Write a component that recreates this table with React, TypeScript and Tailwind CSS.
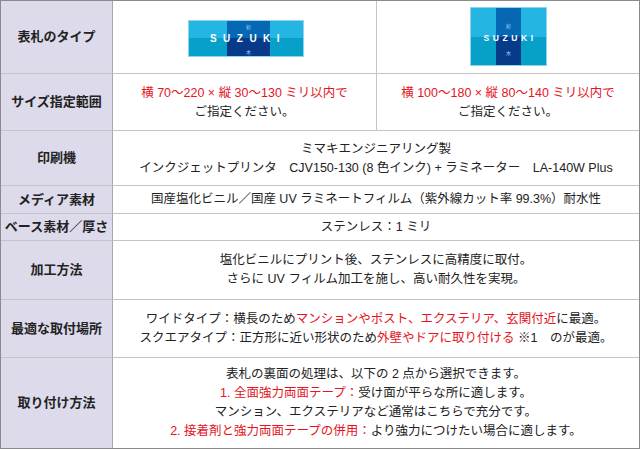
import React from "react";

const font = { fontFamily: '"Liberation Sans", "Noto Sans CJK JP", sans-serif' };

function WideLogo() {
  return (
    <svg width="116" height="37" viewBox="0 0 116 37">
      <rect x="0" y="0" width="116" height="37" fill="#8fd3ee" />
      <rect x="1" y="1" width="38" height="17" fill="#25b5e3" />
      <rect x="1" y="18" width="38" height="18" fill="#06a0c9" />
      <rect x="39" y="1" width="43" height="17" fill="#0668b5" />
      <rect x="39" y="18" width="43" height="18" fill="#083a8a" />
      <rect x="82" y="1" width="33" height="17" fill="#25b5e3" />
      <rect x="82" y="18" width="33" height="18" fill="#06a0c9" />
      <text x="60.5" y="9" fill="#9fd0f0" fontSize="5" textAnchor="middle" style={{ fontFamily: '"Noto Sans CJK JP", sans-serif' }}>鈴</text>
      <text x="60.5" y="34" fill="#9fd0f0" fontSize="5" textAnchor="middle" style={{ fontFamily: '"Noto Sans CJK JP", sans-serif' }}>木</text>
      <text x="60" y="22" fill="#ffffff" fontSize="10" fontWeight="700" textAnchor="middle" letterSpacing="6.5" style={{ fontFamily: '"Liberation Sans", sans-serif' }}>SUZUKI</text>
    </svg>
  );
}

function SquareLogo() {
  return (
    <svg width="77" height="59" viewBox="0 0 77 59">
      <rect x="0" y="0" width="77" height="59" fill="#8fd3ee" />
      <rect x="1" y="1" width="25" height="29" fill="#25b5e3" />
      <rect x="1" y="30" width="25" height="28" fill="#06a0c9" />
      <rect x="26" y="1" width="25" height="29" fill="#0668b5" />
      <rect x="26" y="30" width="25" height="28" fill="#083a8a" />
      <rect x="51" y="1" width="25" height="29" fill="#25b5e3" />
      <rect x="51" y="30" width="25" height="28" fill="#06a0c9" />
      <text x="38.5" y="21" fill="#9fd0f0" fontSize="5" textAnchor="middle" style={{ fontFamily: '"Noto Sans CJK JP", sans-serif' }}>鈴</text>
      <text x="38.5" y="48" fill="#9fd0f0" fontSize="5" textAnchor="middle" style={{ fontFamily: '"Noto Sans CJK JP", sans-serif' }}>木</text>
      <text x="40" y="34" fill="#ffffff" fontSize="8.5" fontWeight="700" textAnchor="middle" letterSpacing="3.6" style={{ fontFamily: '"Liberation Sans", sans-serif' }}>SUZUKI</text>
    </svg>
  );
}

const label =
  "flex items-center justify-center bg-[#dddaeb] border-r border-r-[#a8a8a8] text-[13px] font-bold text-[#222]";
const cell = "flex flex-col items-center justify-center text-center text-[12.5px] leading-[19px] text-[#222]";
const R = ({ children }: { children: React.ReactNode }) => <span className="text-[#e5141e]">{children}</span>;

export default function App() {
  return (
    <div className="bg-white w-[640px] h-[450px]" style={font}>
      <div className="w-[640px] h-[449px] border border-[#8a8a8a] grid grid-cols-[112px_264px_1fr] grid-rows-[73px_57px_55px_28px_27px_59px_58px_1fr]">
        {/* Row 1 */}
        <div className={`${label} border-b border-b-[#c4c4c4]`}>表札のタイプ</div>
        <div className="flex items-center justify-center border-b border-r border-[#c4c4c4] pt-[3px] pl-[2px]">
          <WideLogo />
        </div>
        <div className="flex items-center justify-center border-b border-[#c4c4c4] pb-[2px]">
          <SquareLogo />
        </div>
        {/* Row 2 */}
        <div className={`${label} border-b border-b-[#c4c4c4]`}>サイズ指定範囲</div>
        <div className={`${cell} border-b border-r border-[#c4c4c4] pt-[2px]`}>
          <R>横 70〜220 × 縦 30〜130 ミリ以内で</R>
          <span>ご指定ください。</span>
        </div>
        <div className={`${cell} border-b border-[#c4c4c4] pt-[2px]`}>
          <R>横 100〜180 × 縦 80〜140 ミリ以内で</R>
          <span>ご指定ください。</span>
        </div>
        {/* Row 3 */}
        <div className={`${label} border-b border-b-[#c4c4c4]`}>印刷機</div>
        <div className={`${cell} col-span-2 border-b border-[#c4c4c4] pt-[2px]`}>
          <span>ミマキエンジニアリング製</span>
          <span>インクジェットプリンタ　CJV150-130 (8 色インク) + ラミネーター　LA-140W Plus</span>
        </div>
        {/* Row 4 */}
        <div className={`${label} border-b border-b-[#c4c4c4]`}>メディア素材</div>
        <div className={`${cell} col-span-2 border-b border-[#c4c4c4]`}>
          <span>国産塩化ビニル／国産 UV ラミネートフィルム（紫外線カット率 99.3%）耐水性</span>
        </div>
        {/* Row 5 */}
        <div className={`${label} border-b border-b-[#c4c4c4]`}>ベース素材／厚さ</div>
        <div className={`${cell} col-span-2 border-b border-[#c4c4c4]`}>
          <span>ステンレス：1 ミリ</span>
        </div>
        {/* Row 6 */}
        <div className={`${label} border-b border-b-[#c4c4c4]`}>加工方法</div>
        <div className={`${cell} col-span-2 border-b border-[#c4c4c4]`}>
          <span>塩化ビニルにプリント後、ステンレスに高精度に取付。</span>
          <span>さらに UV フィルム加工を施し、高い耐久性を実現。</span>
        </div>
        {/* Row 7 */}
        <div className={`${label} border-b border-b-[#c4c4c4]`}>最適な取付場所</div>
        <div className={`${cell} col-span-2 border-b border-[#c4c4c4]`}>
          <span>
            ワイドタイプ：横長のため<R>マンションやポスト、エクステリア、玄関付近</R>に最適。
          </span>
          <span>
            スクエアタイプ：正方形に近い形状のため<R>外壁やドアに取り付ける</R> ※1　のが最適。
          </span>
        </div>
        {/* Row 8 */}
        <div className={label}>取り付け方法</div>
        <div className={`${cell} col-span-2`}>
          <span>表札の裏面の処理は、以下の 2 点から選択できます。</span>
          <span>
            <R>1. 全面強力両面テープ：</R>受け面が平らな所に適します。
          </span>
          <span>マンション、エクステリアなど通常はこちらで充分です。</span>
          <span>
            <R>2. 接着剤と強力両面テープの併用：</R>より強力につけたい場合に適します。
          </span>
        </div>
      </div>
    </div>
  );
}
